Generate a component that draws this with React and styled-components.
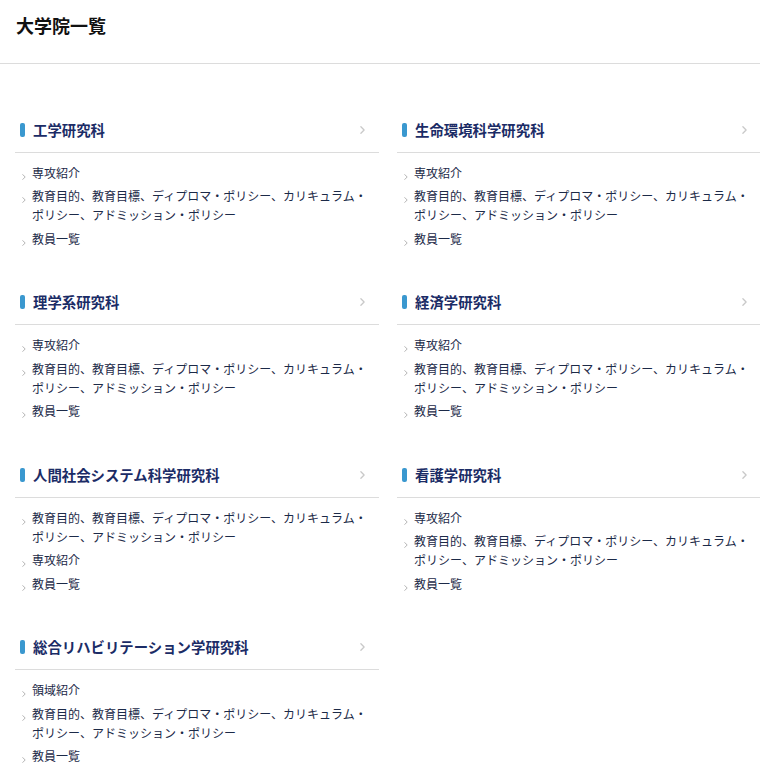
import React from "react";
import styled, { createGlobalStyle } from "styled-components";

const GlobalStyle = createGlobalStyle`
  html, body {
    margin: 0;
    padding: 0;
    background: #fff;
  }
  body {
    font-family: "Noto Sans CJK JP", "Noto Sans", sans-serif;
    color: #1c2a48;
  }
`;

const Page = styled.div`
  width: 760px;
  overflow: hidden;
`;

const Header = styled.header`
  height: 64px;
  padding: 12px 16px 0;
  box-sizing: border-box;
  border-bottom: 1px solid #dcdcdc;
`;

const PageTitle = styled.h1`
  margin: 0;
  font-size: 18px;
  line-height: 27px;
  font-weight: 700;
  color: #111;
`;

const Grid = styled.div`
  display: grid;
  grid-template-columns: 364px 364px;
  column-gap: 18px;
  row-gap: 42.6px;
  padding: 54px 0 0 15px;
`;

const Section = styled.section`
  display: flex;
  flex-direction: column;
`;

const HeadingRow = styled.a`
  display: flex;
  align-items: center;
  gap: 8px;
  height: 24px;
  padding: 0 14px 10px 5px;
  border-bottom: 1px solid #dcdcdc;
  text-decoration: none;
`;

const Bar = styled.span`
  width: 5px;
  height: 14px;
  border-radius: 2px;
  background: #3a98cf;
  flex: none;
`;

const HeadingText = styled.h2`
  flex: 1;
  margin: 0;
  font-size: 14.4px;
  line-height: 24px;
  font-weight: 700;
  color: #1b2c66;
`;

const LinkList = styled.ul`
  list-style: none;
  margin: 0;
  padding: 10px 0 0 7px;
  display: flex;
  flex-direction: column;
  gap: 4.4px;
`;

const LinkItem = styled.li`
  display: flex;
  align-items: flex-start;
  gap: 6px;
`;

const LinkArrow = styled.span`
  flex: none;
  width: 4px;
  padding-top: 10px;
  line-height: 0;
`;

const LinkText = styled.a`
  font-size: 12px;
  line-height: 19px;
  color: #1c2a48;
  text-decoration: none;
  max-width: 342px;
`;

const Chevron = ({ w, h, color, stroke }) => (
  <svg width={w} height={h} viewBox="0 0 6 10" fill="none">
    <path d="M1 1 L5 5 L1 9" stroke={color} strokeWidth={stroke} strokeLinecap="round" strokeLinejoin="round" />
  </svg>
);

const policy = "教育目的、教育目標、ディプロマ・ポリシー、カリキュラム・ポリシー、アドミッション・ポリシー";

const sections = [
  { name: "工学研究科", links: ["専攻紹介", policy, "教員一覧"] },
  { name: "生命環境科学研究科", links: ["専攻紹介", policy, "教員一覧"] },
  { name: "理学系研究科", links: ["専攻紹介", policy, "教員一覧"] },
  { name: "経済学研究科", links: ["専攻紹介", policy, "教員一覧"] },
  { name: "人間社会システム科学研究科", links: [policy, "専攻紹介", "教員一覧"] },
  { name: "看護学研究科", links: ["専攻紹介", policy, "教員一覧"] },
  { name: "総合リハビリテーション学研究科", links: ["領域紹介", policy, "教員一覧"] },
];

export default function App() {
  return (
    <Page>
      <GlobalStyle />
      <Header>
        <PageTitle>大学院一覧</PageTitle>
      </Header>
      <Grid>
        {sections.map((s) => (
          <Section key={s.name}>
            <HeadingRow href="#">
              <Bar />
              <HeadingText>{s.name}</HeadingText>
              <Chevron w={5} h={8} color="#c9c9c9" stroke={1.6} />
            </HeadingRow>
            <LinkList>
              {s.links.map((l, i) => (
                <LinkItem key={i}>
                  <LinkArrow>
                    <Chevron w={4} h={6} color="#8a8a8a" stroke={1.1} />
                  </LinkArrow>
                  <LinkText href="#">{l}</LinkText>
                </LinkItem>
              ))}
            </LinkList>
          </Section>
        ))}
      </Grid>
    </Page>
  );
}
